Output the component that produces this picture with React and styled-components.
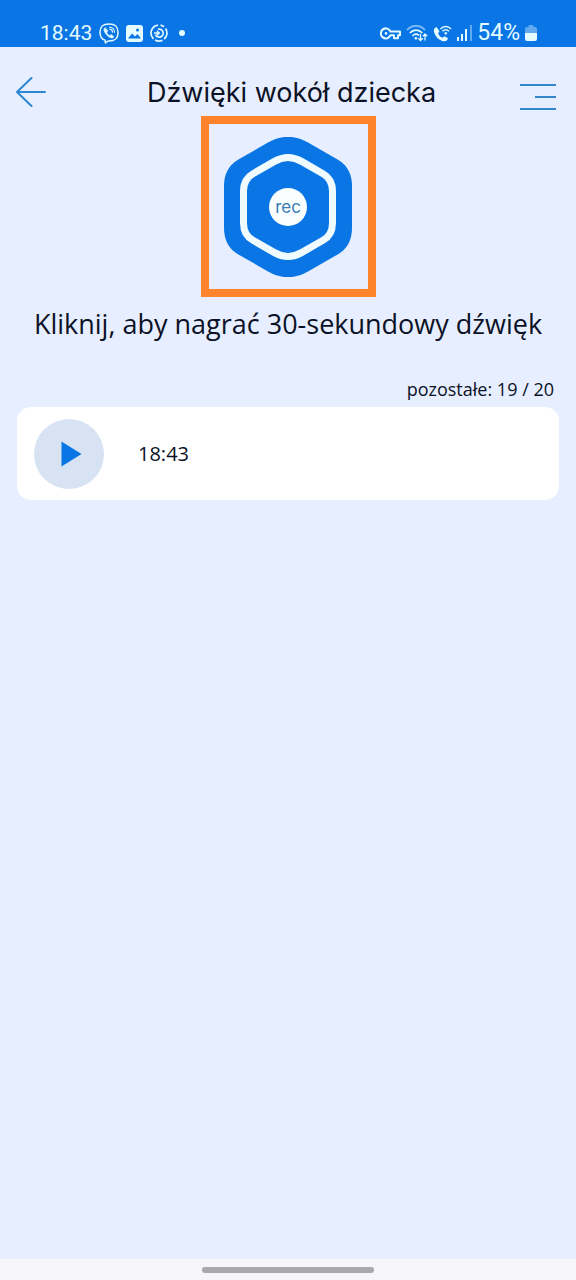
import React from "react";
import styled, { createGlobalStyle } from "styled-components";

const GlobalStyle = createGlobalStyle`
  * {
    box-sizing: border-box;
  }
  body {
    margin: 0;
    background: #e7eeff;
    color: #0b1226;
    font-family: "Open Sans", "Noto Sans", sans-serif;
  }
  button {
    display: block;
    padding: 0;
    border: 0;
    background: none;
    color: inherit;
    font: inherit;
    cursor: pointer;
  }
  svg {
    display: block;
    flex: none;
  }
`;

const Screen = styled.div`
  min-height: 100vh;
  display: flex;
  flex-direction: column;
`;

const StatusBar = styled.div`
  display: flex;
  justify-content: space-between;
  align-items: center;
  height: 47px;
  padding: 19px 39px 0 40px;
  background: #0a76e6;
  color: #e4fbff;
  font-family: Roboto, sans-serif;
  line-height: 28px;
`;

const StatusGroup = styled.div`
  display: flex;
  align-items: center;
  gap: ${(props) => props.$gap};
  font-size: ${(props) => props.$size};
`;

const Header = styled.header`
  display: flex;
  justify-content: space-between;
  align-items: flex-start;
  padding: 29px 20px 0 16px;
`;

const Title = styled.h1`
  flex: 1;
  margin: 0;
  padding-left: 16px;
  font-family: Inter, sans-serif;
  font-size: 27px;
  font-weight: 400;
  line-height: 34px;
  text-align: center;
`;

const Main = styled.main`
  flex: 1;
  display: flex;
  flex-direction: column;
`;

const RecordFrame = styled.div`
  align-self: center;
  padding: 13px 15px 12px;
  border: 8px solid #ff832b;
`;

const Hint = styled.p`
  margin: 9px 0 0;
  font-size: 27px;
  line-height: 36px;
  text-align: center;
`;

const Remaining = styled.p`
  margin: 34px 22px 5px;
  font-size: 18px;
  line-height: 26px;
  text-align: right;
`;

const Recordings = styled.ul`
  margin: 0 17px;
  padding: 0;
  list-style: none;
`;

const Recording = styled.li`
  display: flex;
  align-items: center;
  gap: 34px;
  padding: 12px 17px 11px;
  border-radius: 14px;
  background: #fff;
  font-size: 20px;
  line-height: 28px;
`;

const PlayButton = styled.button`
  width: 70px;
  height: 70px;
  border-radius: 50%;
  background: #d7e2f3;
`;

const NavBar = styled.div`
  display: flex;
  justify-content: center;
  align-items: center;
  height: 21px;
  background: #f6f6f8;
`;

const NavPill = styled.div`
  width: 30%;
  height: 6px;
  border-radius: 3px;
  background: #a9a9ab;
`;

const ViberIcon = () => (
  <svg width="20" height="21" viewBox="0 0 20 21" fill="none" stroke="currentColor" strokeLinecap="round" strokeLinejoin="round">
    <path d="M6 17.2C2.400 16 1 13.800 1 9.500C1 3.500 3.500 1 10 1s9 2.500 9 8.500S16.500 18 10 18l-1 0L6.500 20Z" strokeWidth="1.500" />
    <path d="M6.200 4.700C4.500 5.500 4.500 7 5.600 9c1.600 3 3.700 5 6.600 6c1.200.4 2.300-.4 2.600-1.600l-2.400-1.800l-1.500 1c-1.500-.6-2.600-1.700-3.100-3.200l1-1.300Z" fill="currentColor" strokeWidth=".5" />
    <path d="M10.500 4.200c3 .2 4.900 2 5 5M10.700 6.200c1.800.2 2.800 1.200 2.900 2.900" strokeWidth="1.100" />
  </svg>
);

const PictureIcon = () => (
  <svg width="17" height="17" viewBox="0 0 17 17">
    <rect width="17" height="17" rx="3" fill="currentColor" />
    <path d="M2 13.500l4-5l3 3l2.500-2.500l3.500 4.500Z" fill="#0a76e6" />
    <circle cx="11.500" cy="5" r="1.500" fill="#0a76e6" />
  </svg>
);

const SyncIcon = () => (
  <svg width="18" height="18" viewBox="0 0 18 18" fill="none" stroke="currentColor" strokeWidth="1.700">
    <path d="M8 1.100a8 8 0 0 0-4.500 13.700M5 15.900a8 8 0 0 0 7.500.3M14.200 15a8 8 0 0 0 1.400-10.500M14 2.800A8 8 0 0 0 10.500 1.200" />
    <path d="M8 5.300a4 4 0 1 1-2.500 5.400" />
    <path d="M4 9h5M7 6.800L9.300 9L7 11.200" strokeWidth="1.400" />
  </svg>
);

const KeyIcon = () => (
  <svg width="21" height="13" viewBox="0 0 21 13" fill="none" stroke="currentColor" strokeWidth="2" strokeLinejoin="round">
    <path d="M10.500 4.600H20v3.600h-2v3h-4v-3h-3.500a5 5 0 1 1 0-3.600Z" />
    <circle cx="6" cy="6.400" r="1.300" fill="currentColor" stroke="none" />
  </svg>
);

const WifiIcon = () => (
  <svg width="22" height="18" viewBox="0 0 22 18" fill="none" stroke="currentColor" strokeWidth="1.700">
    <path d="M1 6c5-5.500 13-5.500 18 0" opacity=".55" />
    <path d="M3.800 9c3.500-3.800 9-3.800 12.500 0" />
    <path d="M6.500 12c2-2 4.500-2.200 6.500-.6" />
    <path d="M8 14l2-1.300l1.500 1.300l-1.500 2Z" fill="currentColor" stroke="none" />
    <path d="M14.500 10v6.500M12.300 14.300l2.200 2.200l2.200-2.200M19 16.500V10M17 12.200l2-2.200l2.200 2.200" strokeWidth="1.300" />
  </svg>
);

const CallIcon = () => (
  <svg width="19" height="17" viewBox="0 0 19 17" fill="none" stroke="currentColor">
    <path d="M3.500 2C1 3 .2 5 1.300 8c1.800 4.500 5 7.500 9.700 8.300c2 .2 3.500-.8 4-3l-3.500-2.100l-2.200 1.600c-2-1-3.400-2.500-4.200-4.500l1.400-2Z" fill="currentColor" stroke="none" />
    <path d="M7.500 4c3-3.200 7.500-3.200 10.500 0M9.500 6.300c2-2 4.500-2 6.500 0" strokeWidth="1.500" />
    <path d="M11 8l1.800-1.100L14.500 8l-1.700 2Z" fill="currentColor" stroke="none" />
  </svg>
);

const SignalIcon = () => (
  <svg width="15" height="16" viewBox="0 0 15 16" fill="currentColor">
    <rect y="12" width="2" height="4" />
    <rect x="4" y="9" width="2" height="7" />
    <rect x="8" y="4" width="2" height="12" />
    <rect x="13" width="2" height="16" opacity=".4" />
  </svg>
);

const BatteryIcon = () => (
  <svg width="12" height="16" viewBox="0 0 12 16" fill="currentColor">
    <path d="M0 4q0-2 2-2h1.500V1q0-1 1-1h3q1 0 1 1v1H10q2 0 2 2v4H0Z" opacity=".4" />
    <path d="M0 8h12v6q0 2-2 2H2q-2 0-2-2Z" />
  </svg>
);

const BackIcon = () => (
  <svg width="31" height="32" viewBox="0 0 31 32" fill="none" stroke="#2e86d1" strokeWidth="2" strokeLinecap="round" strokeLinejoin="round">
    <path d="M29 16H1M15.500 2L1 16l14.500 14" />
  </svg>
);

const MenuIcon = () => (
  <svg width="36" height="40" viewBox="0 0 36 40" fill="none" stroke="#3187c8" strokeWidth="2">
    <path d="M0 9h36M15 21h21M0 33h36" />
  </svg>
);

const RecordIcon = () => (
  <svg width="129" height="140" viewBox="0 0 129 140">
    <path
      d="M0 49Q0 31 14 22.700L44 5.500Q64 -5.900 84 5.500L114 22.700Q128 31 128 49V91Q128 109 114 117.300L84 134.500Q64 145.900 44 134.500L14 117.300Q0 109 0 91Z"
      fill="#0a76e6"
    />
    <path
      d="M19.500 54Q19.500 42 29 36.700L50 24.600Q64 16.500 78 24.600L99 36.700Q108.500 42 108.500 54V86Q108.500 98 99 103.300L78 115.400Q64 123.500 50 115.400L29 103.300Q19.500 98 19.500 86Z"
      fill="none"
      stroke="#f0fbff"
      strokeWidth="7"
    />
    <circle cx="64" cy="70" r="19" fill="#fafeff" />
    <text x="64" y="76" textAnchor="middle" fontFamily="Inter, sans-serif" fontSize="17" fill="#3c7bb5">
      rec
    </text>
  </svg>
);

const PlayIcon = () => (
  <svg width="70" height="70" viewBox="0 0 70 70">
    <path d="M27.500 22.500L47.500 35L27.500 47.500Z" fill="#0a76e6" />
  </svg>
);

const RECORDINGS = ["18:43"];
const LIMIT = 20;

export default function App() {
  return (
    <Screen>
      <GlobalStyle />
      <StatusBar>
        <StatusGroup $gap="7px" $size="21px">
          <span>18:43</span>
          <ViberIcon />
          <PictureIcon />
          <SyncIcon />
          <svg width="14" height="6" viewBox="0 0 14 6">
            <circle cx="7" cy="3" r="3" fill="currentColor" />
          </svg>
        </StatusGroup>
        <StatusGroup $gap="5px" $size="23px">
          <KeyIcon />
          <WifiIcon />
          <CallIcon />
          <SignalIcon />
          <span>54%</span>
          <BatteryIcon />
        </StatusGroup>
      </StatusBar>
      <Header>
        <button type="button" aria-label="Wstecz">
          <BackIcon />
        </button>
        <Title>Dźwięki wokół dziecka</Title>
        <button type="button" aria-label="Menu">
          <MenuIcon />
        </button>
      </Header>
      <Main>
        <RecordFrame>
          <button type="button" aria-label="Nagraj">
            <RecordIcon />
          </button>
        </RecordFrame>
        <Hint>Kliknij, aby nagrać 30-sekundowy dźwięk</Hint>
        <Remaining>
          pozostałe: {LIMIT - RECORDINGS.length} / {LIMIT}
        </Remaining>
        <Recordings>
          {RECORDINGS.map((time) => (
            <Recording key={time}>
              <PlayButton type="button" aria-label="Odtwórz">
                <PlayIcon />
              </PlayButton>
              <span>{time}</span>
            </Recording>
          ))}
        </Recordings>
      </Main>
      <NavBar>
        <NavPill />
      </NavBar>
    </Screen>
  );
}
